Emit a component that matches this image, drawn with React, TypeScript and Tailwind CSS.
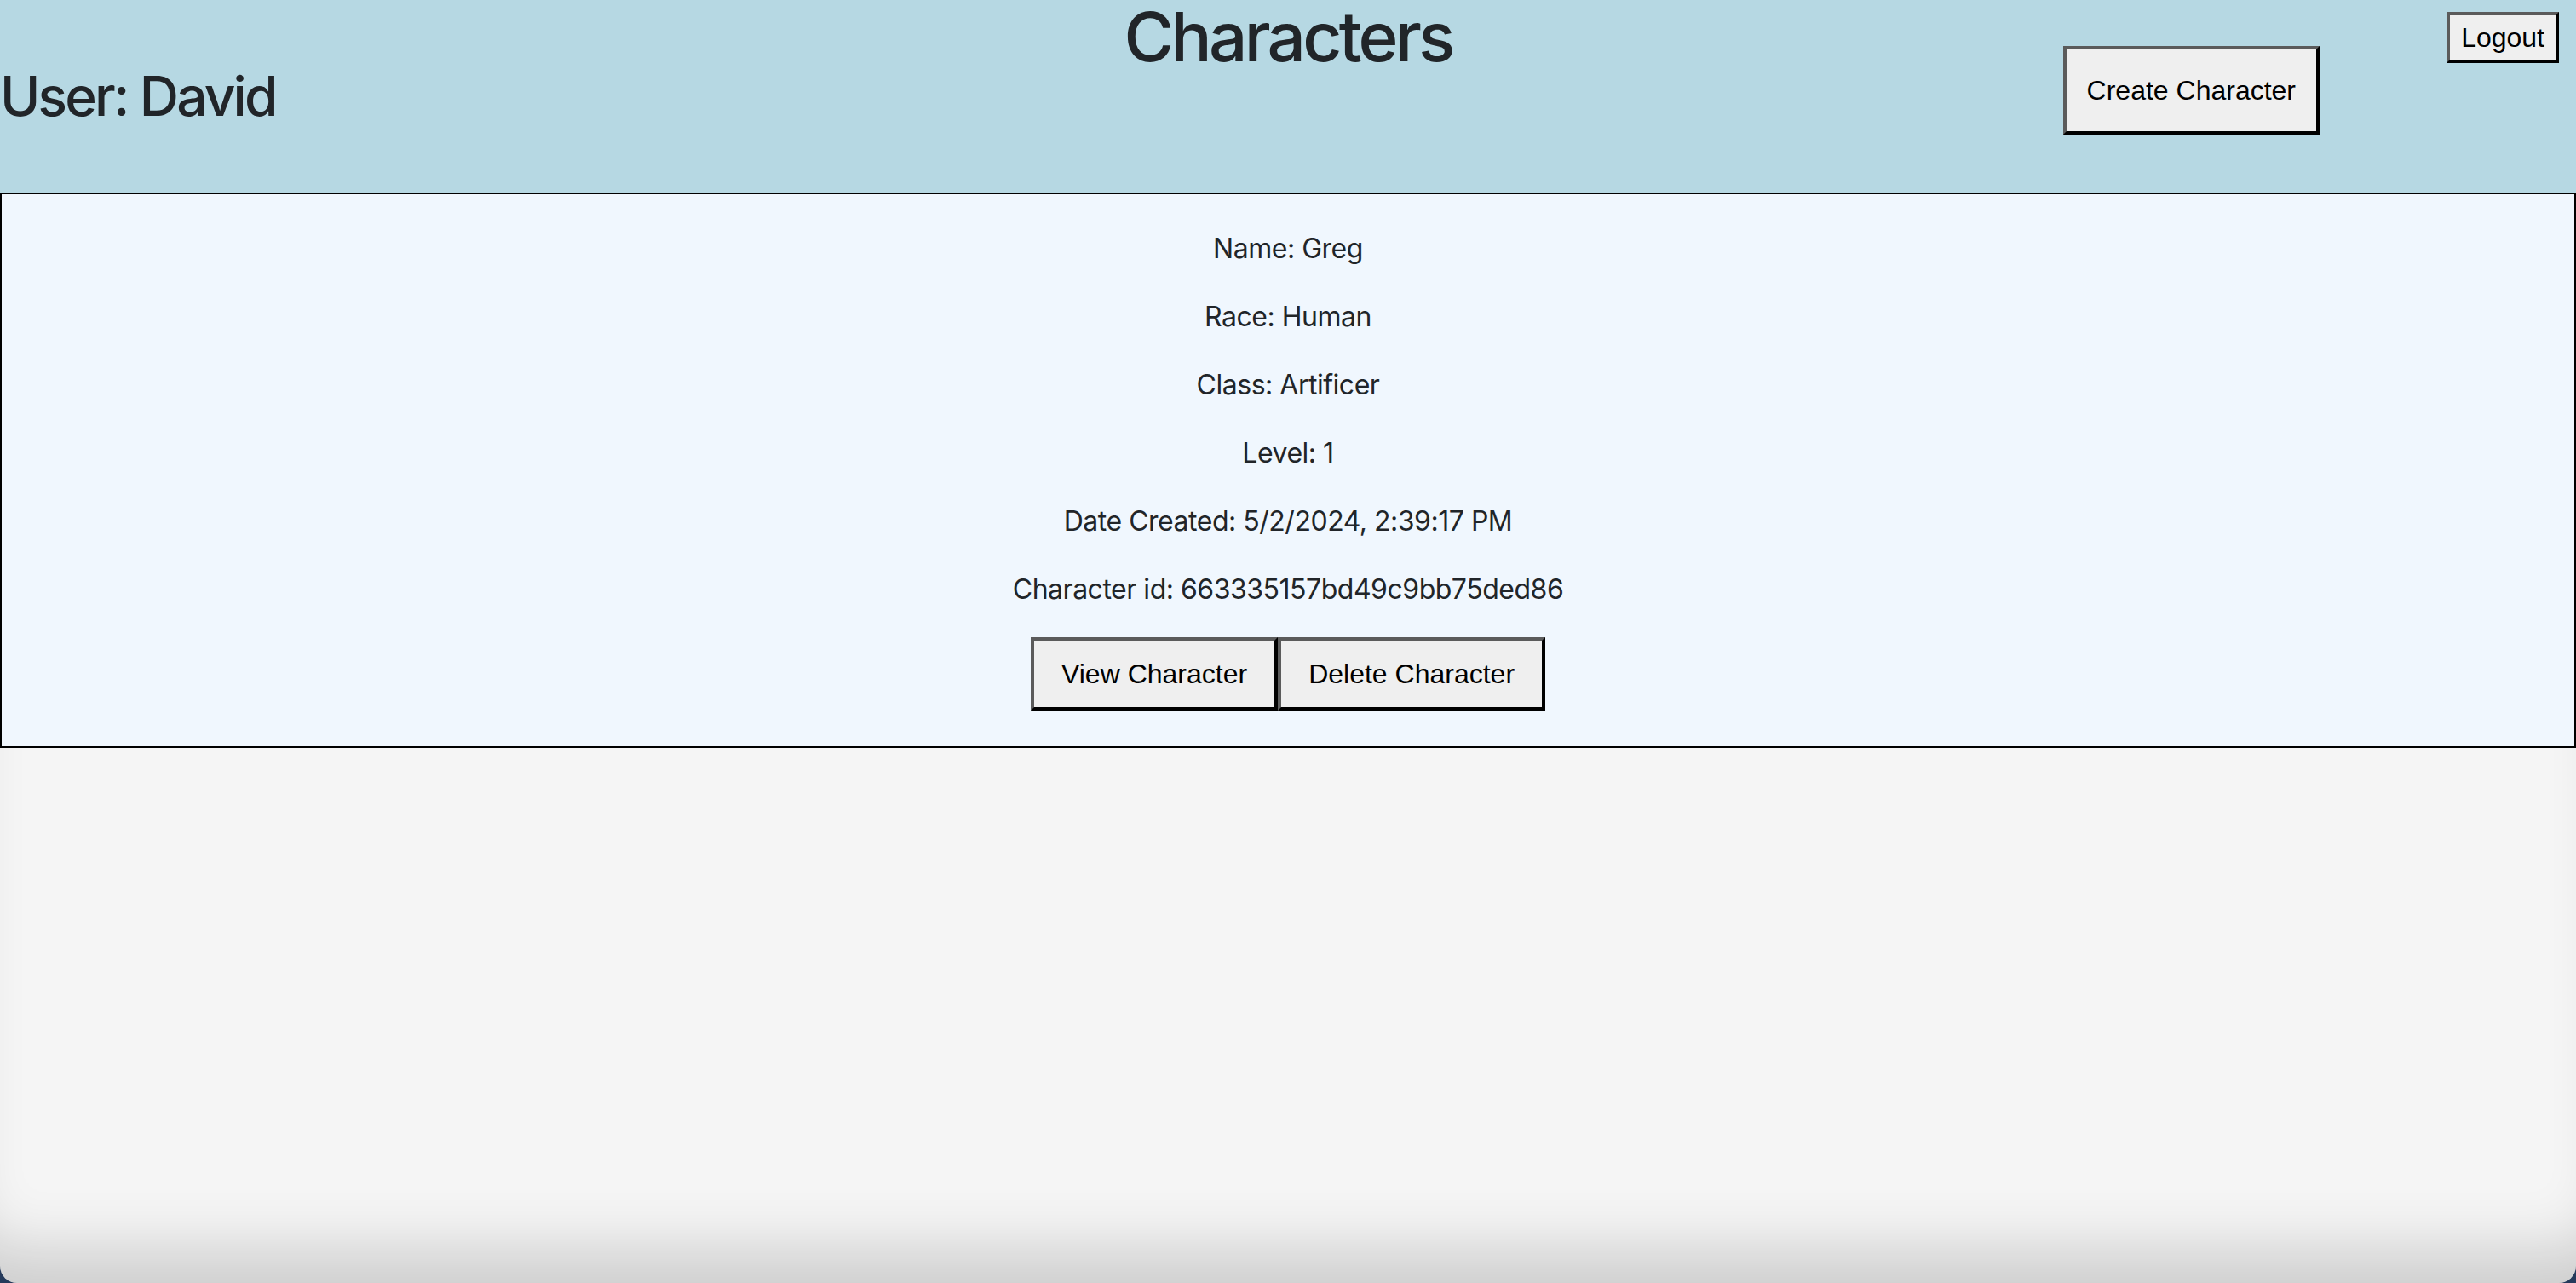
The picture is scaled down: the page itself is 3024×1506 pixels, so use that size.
const character = {
  name: "Greg",
  race: "Human",
  className: "Artificer",
  level: 1,
  created: "5/2/2024, 2:39:17 PM",
  id: "663335157bd49c9bb75ded86",
};

const btn =
  "bg-[#efefef] text-black font-['Liberation_Sans',Arial,sans-serif] tracking-normal text-[32px] leading-[48px] border-4 border-t-[#5b5b5b] border-l-[#5b5b5b] border-b-black border-r-black";

function CharacterCard() {
  const rows = [
    `Name: ${character.name}`,
    `Race: ${character.race}`,
    `Class: ${character.className}`,
    `Level: ${character.level}`,
    `Date Created: ${character.created}`,
    `Character id: ${character.id}`,
  ];
  return (
    <div className="border-2 border-black bg-[#f0f7fe] pt-[40px] pb-[42px] flex flex-col items-center">
      {rows.map((r) => (
        <p key={r} className="text-[32px] leading-[48px] mb-[32px] tracking-[-0.015em]">
          {r}
        </p>
      ))}
      <div className="flex">
        <button className={`${btn} px-[32px] py-[15px]`}>View Character</button>
        <button className={`${btn} px-[32px] py-[15px]`}>Delete Character</button>
      </div>
    </div>
  );
}

export default function App() {
  return (
    <div className="h-screen flex flex-col bg-[#253a5b] font-['Inter',sans-serif] text-[#212529]">
      <div className="flex-1 flex flex-col bg-[#f5f5f5] rounded-b-[20px] overflow-hidden shadow-[inset_0_-80px_70px_-40px_rgba(0,0,0,0.16)]">
        <header className="relative h-[226px] bg-[#b6d8e3] flex items-center">
          <div className="flex-1">
            <h2 className="text-[64px] leading-[1.2] font-medium tracking-[-0.044em]">User: David</h2>
          </div>
          <h1 className="self-start text-[80px] leading-[86px] font-medium tracking-[-0.046em]">Characters</h1>
          <div className="flex-1 flex justify-end">
            <button className={`${btn} px-[24px] py-[24px] mb-[15px] mr-[301px]`}>Create Character</button>
          </div>
          <button className={`${btn} absolute top-[14px] right-[20px] px-[13px] py-[2px]`}>Logout</button>
        </header>
        <CharacterCard />
      </div>
    </div>
  );
}
